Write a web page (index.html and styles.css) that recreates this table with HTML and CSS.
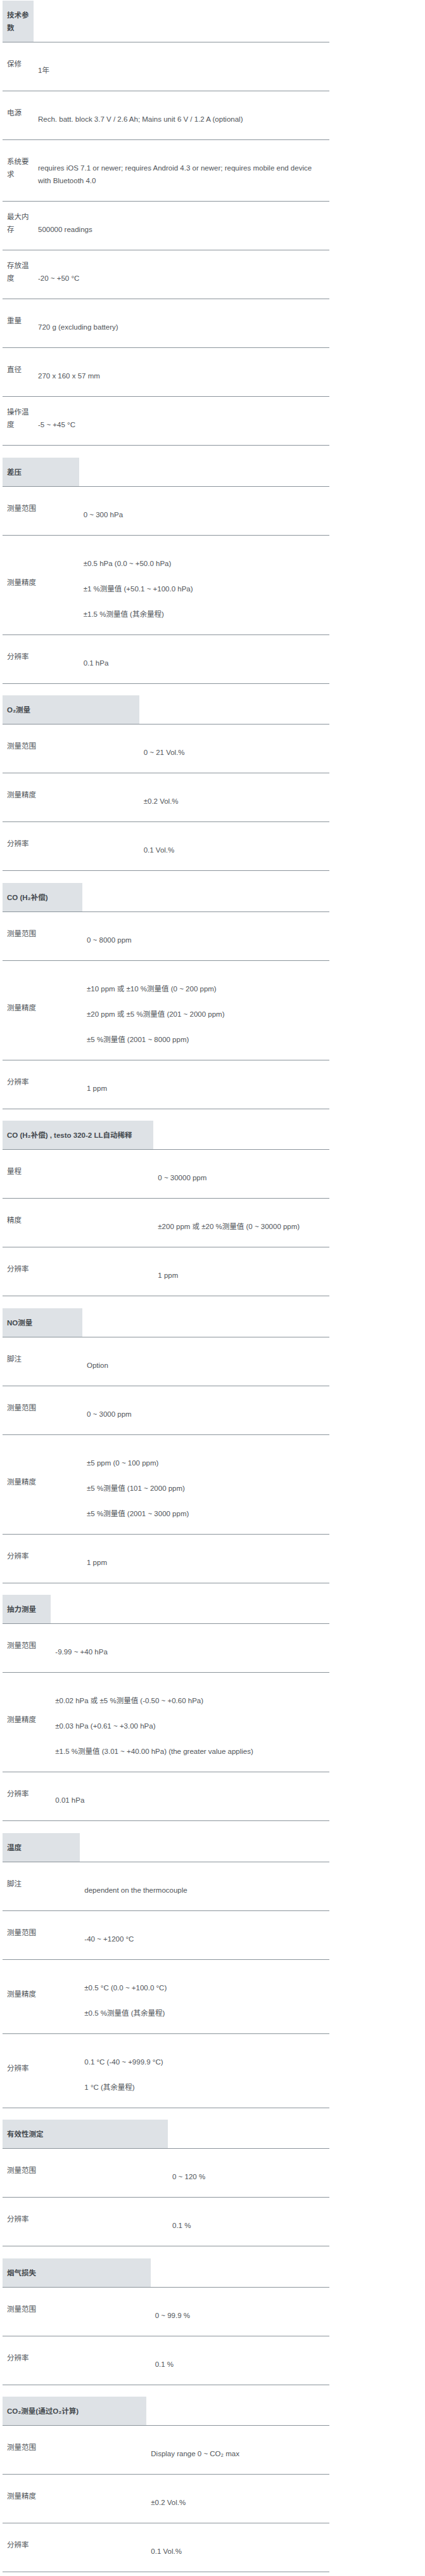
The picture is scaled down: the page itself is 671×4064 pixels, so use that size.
FILE: index.html
```html
<!DOCTYPE html>
<html lang="zh">
<head>
<meta charset="utf-8">
<title>技术参数</title>
<link rel="stylesheet" href="styles.css">
</head>
<body>
<main class="specs">

<table class="spec">
<colgroup><col class="c1"><col></colgroup>
<tr class="head"><th>技术参数</th><td></td></tr>
<tr><th>保修</th><td><div class="v">1年</div></td></tr>
<tr><th>电源</th><td><div class="v">Rech. batt. block 3.7 V / 2.6 Ah; Mains unit 6 V / 1.2 A (optional)</div></td></tr>
<tr><th>系统要求</th><td><div class="v">requires iOS 7.1 or newer; requires Android 4.3 or newer; requires mobile end device with Bluetooth 4.0</div></td></tr>
<tr><th>最大内存</th><td><div class="v">500000 readings</div></td></tr>
<tr><th>存放温度</th><td><div class="v">-20 ~ +50 °C</div></td></tr>
<tr><th>重量</th><td><div class="v">720 g (excluding battery)</div></td></tr>
<tr><th>直径</th><td><div class="v">270 x 160 x 57 mm</div></td></tr>
<tr><th>操作温度</th><td><div class="v">-5 ~ +45 °C</div></td></tr>
</table>

<table class="spec">
<colgroup><col class="c2"><col></colgroup>
<tr class="head"><th>差压</th><td></td></tr>
<tr><th>测量范围</th><td><div class="v">0 ~ 300 hPa</div></td></tr>
<tr><th>测量精度</th><td><div class="v">±0.5 hPa (0.0 ~ +50.0 hPa)</div><div class="v">±1 %测量值 (+50.1 ~ +100.0 hPa)</div><div class="v">±1.5 %测量值 (其余量程)</div></td></tr>
<tr><th>分辨率</th><td><div class="v">0.1 hPa</div></td></tr>
</table>

<table class="spec">
<colgroup><col class="c3"><col></colgroup>
<tr class="head"><th>O₂测量</th><td></td></tr>
<tr><th>测量范围</th><td><div class="v">0 ~ 21 Vol.%</div></td></tr>
<tr><th>测量精度</th><td><div class="v">±0.2 Vol.%</div></td></tr>
<tr><th>分辨率</th><td><div class="v">0.1 Vol.%</div></td></tr>
</table>

<table class="spec">
<colgroup><col class="c4"><col></colgroup>
<tr class="head"><th>CO (H₂补偿)</th><td></td></tr>
<tr><th>测量范围</th><td><div class="v">0 ~ 8000 ppm</div></td></tr>
<tr><th>测量精度</th><td><div class="v">±10 ppm 或 ±10 %测量值 (0 ~ 200 ppm)</div><div class="v">±20 ppm 或 ±5 %测量值 (201 ~ 2000 ppm)</div><div class="v">±5 %测量值 (2001 ~ 8000 ppm)</div></td></tr>
<tr><th>分辨率</th><td><div class="v">1 ppm</div></td></tr>
</table>

<table class="spec">
<colgroup><col class="c5"><col></colgroup>
<tr class="head"><th>CO (H₂补偿) , testo 320-2 LL自动稀释</th><td></td></tr>
<tr><th>量程</th><td><div class="v">0 ~ 30000 ppm</div></td></tr>
<tr><th>精度</th><td><div class="v">±200 ppm 或 ±20 %测量值 (0 ~ 30000 ppm)</div></td></tr>
<tr><th>分辨率</th><td><div class="v">1 ppm</div></td></tr>
</table>

<table class="spec">
<colgroup><col class="c6"><col></colgroup>
<tr class="head"><th>NO测量</th><td></td></tr>
<tr><th>脚注</th><td><div class="v">Option</div></td></tr>
<tr><th>测量范围</th><td><div class="v">0 ~ 3000 ppm</div></td></tr>
<tr><th>测量精度</th><td><div class="v">±5 ppm (0 ~ 100 ppm)</div><div class="v">±5 %测量值 (101 ~ 2000 ppm)</div><div class="v">±5 %测量值 (2001 ~ 3000 ppm)</div></td></tr>
<tr><th>分辨率</th><td><div class="v">1 ppm</div></td></tr>
</table>

<table class="spec">
<colgroup><col class="c7"><col></colgroup>
<tr class="head"><th>抽力测量</th><td></td></tr>
<tr><th>测量范围</th><td><div class="v">-9.99 ~ +40 hPa</div></td></tr>
<tr><th>测量精度</th><td><div class="v">±0.02 hPa 或 ±5 %测量值 (-0.50 ~ +0.60 hPa)</div><div class="v">±0.03 hPa (+0.61 ~ +3.00 hPa)</div><div class="v">±1.5 %测量值 (3.01 ~ +40.00 hPa) (the greater value applies)</div></td></tr>
<tr><th>分辨率</th><td><div class="v">0.01 hPa</div></td></tr>
</table>

<table class="spec">
<colgroup><col class="c8"><col></colgroup>
<tr class="head"><th>温度</th><td></td></tr>
<tr><th>脚注</th><td><div class="v">dependent on the thermocouple</div></td></tr>
<tr><th>测量范围</th><td><div class="v">-40 ~ +1200 °C</div></td></tr>
<tr><th>测量精度</th><td><div class="v">±0.5 °C (0.0 ~ +100.0 °C)</div><div class="v">±0.5 %测量值 (其余量程)</div></td></tr>
<tr><th>分辨率</th><td><div class="v">0.1 °C (-40 ~ +999.9 °C)</div><div class="v">1 °C (其余量程)</div></td></tr>
</table>

<table class="spec">
<colgroup><col class="c9"><col></colgroup>
<tr class="head"><th>有效性测定</th><td></td></tr>
<tr><th>测量范围</th><td><div class="v">0 ~ 120 %</div></td></tr>
<tr><th>分辨率</th><td><div class="v">0.1 %</div></td></tr>
</table>

<table class="spec">
<colgroup><col class="c10"><col></colgroup>
<tr class="head"><th>烟气损失</th><td></td></tr>
<tr><th>测量范围</th><td><div class="v">0 ~ 99.9 %</div></td></tr>
<tr><th>分辨率</th><td><div class="v">0.1 %</div></td></tr>
</table>

<table class="spec">
<colgroup><col class="c11"><col></colgroup>
<tr class="head"><th>CO₂测量(通过O₂计算)</th><td></td></tr>
<tr><th>测量范围</th><td><div class="v">Display range 0 ~ CO₂ max</div></td></tr>
<tr><th>测量精度</th><td><div class="v">±0.2 Vol.%</div></td></tr>
<tr><th>分辨率</th><td><div class="v">0.1 Vol.%</div></td></tr>
</table>

</main>
</body>
</html>
```

FILE: styles.css
```css
html, body {
  margin: 0;
  padding: 0;
  background: #ffffff;
}

body {
  font-family: "Liberation Sans", "Noto Sans CJK SC", sans-serif;
  font-size: 11.5px;
  line-height: 20px;
  color: #4f5459;
}

.specs {
  padding: 1px 0 0 4px;
}

.spec {
  width: 516px;
  table-layout: fixed;
  border-collapse: separate;
  border-spacing: 0;
  margin: 0 0 18.5px 0;
}

.spec th,
.spec td {
  text-align: left;
  vertical-align: middle;
  border-bottom: 1px solid #8b949b;
  word-break: normal;
  overflow-wrap: anywhere;
}

.spec th {
  font-weight: normal;
  padding: 12px 7px 20px 7px;
}

.spec td {
  padding: 34px 7px 22px 7px;
}

.spec .head th {
  background: #dee2e6;
  font-weight: bold;
  color: #454a4f;
  padding: 13px 7px 12px 7px;
}

.spec .head td {
  padding: 13px 7px 12px 7px;
}

.v + .v {
  margin-top: 20px;
}

.c1 { width: 49px; }
.c2 { width: 120.7px; }
.c3 { width: 215.7px; }
.c4 { width: 126px; }
.c5 { width: 238.3px; }
.c6 { width: 126px; }
.c7 { width: 76.3px; }
.c8 { width: 122.3px; }
.c9 { width: 261px; }
.c10 { width: 233.7px; }
.c11 { width: 227.3px; }
```
